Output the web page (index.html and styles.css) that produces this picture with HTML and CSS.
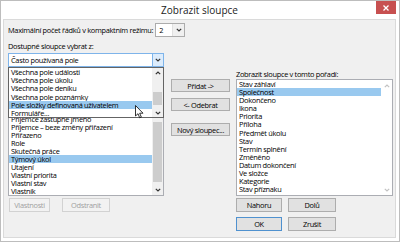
FILE: index.html
```html
<!DOCTYPE html>
<html>
<head>
<link rel="stylesheet" href="styles.css">
<meta charset="UTF-8">
<title>Zobrazit sloupce</title>
</head>
<body>
<div class="window">
	<div class="titlebar">
		<span class="title">Zobrazit sloupce</span>
		<span class="close"><svg width="6" height="6" viewBox="0 0 6 6"><path d="M0.5 0.5 L5.5 5.5 M5.5 0.5 L0.5 5.5"/></svg></span>
	</div>
	<div class="panel">
		<div class="row_max">
			<span>Maximální počet řádků v kompaktním režimu:</span>
			<div class="spin">
				<span class="spin_val">2</span>
				<span class="spin_btn"><svg class="chev" viewBox="0 0 6 4"><path d="M0.8 0.8 L3 3 L5.2 0.8"/></svg></span>
			</div>
		</div>
		<div class="label_avail">Dostupné sloupce vybrat z:</div>
		<div class="columns">
			<div class="col_left">
				<div class="combo">
					<span class="combo_val">Často používaná pole</span>
					<span class="combo_btn"><svg class="chev" viewBox="0 0 6 4"><path d="M0.8 0.8 L3 3 L5.2 0.8"/></svg></span>
				</div>
				<div class="listbox list_left">
					<div class="items">
						<div class="item">Plánovaná práce</div>
						<div class="item">Požadováno uživatelem</div>
						<div class="item">Procento dokončení</div>
						<div class="item">Příjemce</div>
						<div class="item">Příjemce zástupné jméno</div>
						<div class="item">Příjemce – beze změny přiřazení</div>
						<div class="item">Přiřazeno</div>
						<div class="item">Role</div>
						<div class="item">Skutečná práce</div>
						<div class="item selected">Týmový úkol</div>
						<div class="item">Utajení</div>
						<div class="item">Vlastní priorita</div>
						<div class="item">Vlastní stav</div>
						<div class="item">Vlastník</div>
					</div>
					<div class="scrollbar">
						<span class="sb_btn"><svg class="chev" viewBox="0 0 6 4"><path d="M0.8 3.2 L3 1 L5.2 3.2"/></svg></span>
						<div class="sb_track"><div class="sb_thumb thumb_left"></div></div>
						<span class="sb_btn"><svg class="chev" viewBox="0 0 6 4"><path d="M0.8 0.8 L3 3 L5.2 0.8"/></svg></span>
					</div>
				</div>
				<div class="dropdown">
					<div class="items">
						<div class="item drop_item">Všechna pole události</div>
						<div class="item drop_item">Všechna pole úkolu</div>
						<div class="item drop_item">Všechna pole deníku</div>
						<div class="item drop_item">Všechna pole poznámky</div>
						<div class="item drop_item selected">Pole složky definovaná uživatelem</div>
						<div class="item drop_item">Formuláře...</div>
					</div>
					<div class="scrollbar">
						<span class="sb_btn"><svg class="chev" viewBox="0 0 6 4"><path d="M0.8 3.2 L3 1 L5.2 3.2"/></svg></span>
						<div class="sb_track"><div class="sb_thumb thumb_drop"></div></div>
						<span class="sb_btn"><svg class="chev" viewBox="0 0 6 4"><path d="M0.8 0.8 L3 3 L5.2 0.8"/></svg></span>
					</div>
				</div>
				<div class="btn_row">
					<button class="btn disabled b_props">Vlastnosti</button>
					<button class="btn disabled b_remove">Odstranit</button>
				</div>
			</div>
			<div class="col_mid">
				<button class="btn mid_btn b_add">Přidat -&gt;</button>
				<button class="btn mid_btn b_del">&lt;- Odebrat</button>
				<button class="btn mid_btn b_new">Nový sloupec...</button>
			</div>
			<div class="col_right">
				<div class="label_order">Zobrazit sloupce v tomto pořadí:</div>
				<div class="listbox list_right">
					<div class="items items_top">
						<div class="item r_item">Stav záhlaví</div>
						<div class="item r_item selected">Společnost</div>
						<div class="item r_item">Dokončeno</div>
						<div class="item r_item">Ikona</div>
						<div class="item r_item">Priorita</div>
						<div class="item r_item">Příloha</div>
						<div class="item r_item">Předmět úkolu</div>
						<div class="item r_item">Stav</div>
						<div class="item r_item">Termín splnění</div>
						<div class="item r_item">Změněno</div>
						<div class="item r_item">Datum dokončení</div>
						<div class="item r_item">Ve složce</div>
						<div class="item r_item">Kategorie</div>
						<div class="item r_item">Stav příznaku</div>
					</div>
					<div class="scrollbar sb_light">
						<span class="sb_btn"><svg class="chev" viewBox="0 0 6 4"><path d="M0.8 3.2 L3 1 L5.2 3.2"/></svg></span>
						<div class="sb_track"></div>
						<span class="sb_btn"><svg class="chev" viewBox="0 0 6 4"><path d="M0.8 0.8 L3 3 L5.2 0.8"/></svg></span>
					</div>
				</div>
				<div class="btn_row">
					<button class="btn b_up">Nahoru</button>
					<button class="btn b_down">Dolů</button>
				</div>
				<div class="btn_row row_ok">
					<button class="btn default b_ok">OK</button>
					<button class="btn b_cancel">Zrušit</button>
				</div>
			</div>
		</div>
	</div>
	<svg class="cursor" width="9" height="14" viewBox="0 0 9 14"><path d="M0.5 0.5 L0.5 11 L3 8.7 L4.7 12.8 L6.3 12.1 L4.7 8.2 L8 8.2 Z"/></svg>
</div>
</body>
</html>
```

FILE: styles.css
```css
* {
	box-sizing: border-box;
}
body {
	margin: 0;
	background: #fff;
	font-family: "Open Sans", "Noto Sans", sans-serif;
	font-size: 7.4px;
	font-weight: 500;
	letter-spacing: -0.3px;
	color: #000;
}
.window {
	position: relative;
	width: 400px;
	height: 242px;
	border: 1px solid #bdbdbd;
	padding: 0 3px 3px 2px;
	background: #fff;
	display: flex;
	flex-direction: column;
}
.titlebar {
	height: 18px;
	display: grid;
	grid-template-columns: 1fr auto 1fr;
	align-items: start;
}
.title {
	grid-column: 2;
	font-size: 10px;
	font-weight: 400;
	letter-spacing: 0;
	line-height: 18px;
	color: #222;
}
.close {
	grid-column: 3;
	justify-self: end;
	width: 20px;
	height: 13px;
	background: #c75050;
	display: flex;
	align-items: center;
	justify-content: center;
}
.close svg path {
	stroke: #fff;
	stroke-width: 1.3;
}
.panel {
	flex: 1;
	border: 1px solid #dadada;
	background: #f0f0f0;
	padding: 3px 2px 0 4px;
}
.row_max {
	display: flex;
	align-items: center;
	height: 14px;
	gap: 2px;
}
.spin {
	width: 30px;
	height: 14px;
	border: 1px solid #acacac;
	background: #fff;
	display: flex;
}
.spin_val {
	flex: 1;
	padding-left: 3px;
	line-height: 12px;
}
.spin_btn {
	width: 12px;
	background: #f0f0f0;
	border-left: 1px solid #e0e0e0;
	display: flex;
	align-items: center;
	justify-content: center;
}
.chev {
	width: 6px;
	height: 4px;
}
.chev path {
	fill: none;
	stroke: #333;
	stroke-width: 1.2;
}
.label_avail {
	margin-top: 4px;
	line-height: 10px;
}
.columns {
	margin-top: 2px;
	display: flex;
}
.col_left {
	position: relative;
	width: 156px;
	display: flex;
	flex-direction: column;
}
.combo {
	height: 14px;
	border: 1px solid #7eb4ea;
	background: #fff;
	display: flex;
}
.combo_val {
	flex: 1;
	padding-left: 2px;
	line-height: 12px;
}
.combo_btn {
	width: 11px;
	background: #dcecfc;
	border-left: 1px solid #7eb4ea;
	display: flex;
	align-items: center;
	justify-content: center;
}
.listbox {
	border: 1px solid #abadb3;
	background: #fff;
	display: flex;
}
.list_left {
	height: 129px;
}
.list_right {
	height: 117px;
}
.items {
	flex: 1;
	display: flex;
	flex-direction: column;
	justify-content: flex-end;
	overflow: hidden;
}
.items_top {
	justify-content: flex-start;
}
.item {
	height: 8px;
	line-height: 8px;
	padding-left: 2px;
	white-space: nowrap;
	flex-shrink: 0;
}
.drop_item {
	height: 8.2px;
	line-height: 8.2px;
}
.r_item {
	height: 8.1px;
	line-height: 8.1px;
}
.selected {
	background: #99c9ef;
}
.scrollbar {
	width: 11px;
	background: #f0f0f0;
	display: flex;
	flex-direction: column;
}
.sb_btn {
	height: 11px;
	display: flex;
	align-items: center;
	justify-content: center;
	flex-shrink: 0;
}
.sb_track {
	flex: 1;
}
.sb_thumb {
	margin: 0 1px;
	background: #cdcdcd;
}
.thumb_left {
	margin-top: 43px;
	height: 60px;
}
.thumb_drop {
	margin-top: 15px;
	height: 13px;
}
.sb_light {
	background: #fff;
}
.sb_light .chev path {
	stroke: #c2c2c2;
}
.dropdown {
	position: absolute;
	left: 0;
	top: 14px;
	width: 156px;
	height: 51px;
	border: 1px solid #646464;
	background: #fff;
	display: flex;
}
.dropdown .items {
	justify-content: flex-start;
}
.dropdown .sb_btn {
	height: 9px;
}
.btn_row {
	margin-top: 2px;
	display: flex;
}
.row_ok {
	margin-top: 5px;
}
.btn {
	height: 14px;
	padding: 0;
	border: 1px solid #adadad;
	background: #e1e1e1;
	font-family: inherit;
	font-size: 7.4px;
	font-weight: 500;
	letter-spacing: -0.3px;
	color: #000;
	line-height: 12px;
}
.btn.disabled {
	background: #f2f2f2;
	border-color: #d2d2d2;
	color: #a0a0a0;
}
.btn.default {
	border-color: #4f91cf;
}
.b_props {
	margin-left: 1px;
	width: 41px;
}
.b_remove {
	margin-left: 12px;
	width: 48px;
}
.col_mid {
	margin-left: 7px;
	width: 59px;
	display: flex;
	flex-direction: column;
}
.mid_btn {
	width: 59px;
	height: 13px;
}
.b_add {
	margin-top: 26px;
}
.b_del {
	margin-top: 6px;
}
.b_new {
	margin-top: 12px;
}
.col_right {
	margin-left: 6px;
	width: 157px;
	display: flex;
	flex-direction: column;
}
.label_order {
	margin-top: 17px;
	line-height: 9px;
}
.b_up, .b_ok {
	width: 46px;
}
.b_down, .b_cancel {
	margin-left: 6px;
	width: 48px;
}
.cursor {
	position: absolute;
	left: 134px;
	top: 104px;
}
.cursor path {
	fill: #fff;
	stroke: #000;
	stroke-width: 0.8;
	stroke-linejoin: round;
}
```
